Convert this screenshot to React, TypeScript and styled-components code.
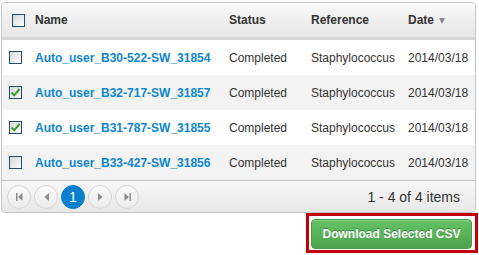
import React from "react";
import styled, { createGlobalStyle } from "styled-components";

const Global = createGlobalStyle`
  html, body { margin: 0; padding: 0; background: #fff; }
  body { font-family: "Liberation Sans", Arial, sans-serif; font-size: 12px; color: #333; }
`;

const Page = styled.div`
  width: 479px;
  padding-top: 2px;
  box-sizing: border-box;
`;

const Grid = styled.div`
  margin-left: 1px;
  width: 475px;
  box-sizing: border-box;
  border: 1px solid #c5c5c5;
  border-radius: 4px;
  overflow: hidden;
`;

const COLS = "27px 194px 82px 97px 1fr";

const HeaderRow = styled.div`
  display: grid;
  grid-template-columns: ${COLS};
  height: 37px;
  box-sizing: border-box;
  border-bottom: 3px solid #d6d6d6;
  background: linear-gradient(#f8f8f8, #e6e6e6);
  align-items: center;
`;

const HeadCell = styled.div`
  padding-left: 6px;
  font-weight: bold;
  color: #333;
  display: flex;
  align-items: center;
  gap: 5px;
`;

const CheckCell = styled.div<{ $offset: number }>`
  padding-left: ${(p) => p.$offset}px;
  display: flex;
  align-items: center;
`;

const Row = styled.div<{ $alt: boolean }>`
  display: grid;
  grid-template-columns: ${COLS};
  height: 35px;
  align-items: center;
  background: ${(p) => (p.$alt ? "#f3f3f3" : "#fff")};
`;

const Cell = styled.div`
  padding-left: 6px;
  white-space: nowrap;
  color: #333;
`;

const NameLink = styled.a`
  padding-left: 6px;
  font-weight: bold;
  color: #0d86d0;
  text-decoration: none;
  white-space: nowrap;
`;

const Box = styled.span`
  width: 13px;
  height: 13px;
  box-sizing: border-box;
  border: 1px solid #1d4c78;
  background: linear-gradient(135deg, #d8d8d8, #fdfdfd);
  display: inline-flex;
  align-items: center;
  justify-content: center;
`;

const SortArrow = styled.span`
  width: 0;
  height: 0;
  border-left: 3.5px solid transparent;
  border-right: 3.5px solid transparent;
  border-top: 6px solid #8a8a8a;
  margin-top: 1px;
`;

const Pager = styled.div`
  height: 32px;
  box-sizing: border-box;
  border-top: 1px solid #c5c5c5;
  background: linear-gradient(#f7f7f7, #e8e8e8);
  display: flex;
  align-items: center;
  padding-left: 5px;
  padding-right: 15px;
`;

const PageButtons = styled.div`
  display: flex;
  gap: 3px;
`;

const PageBtn = styled.span<{ $active?: boolean }>`
  width: 24px;
  height: 24px;
  box-sizing: border-box;
  border-radius: 50%;
  border: 1px solid ${(p) => (p.$active ? "#0a7cc9" : "#d3d3d3")};
  background: ${(p) => (p.$active ? "#0a7fcd" : "linear-gradient(#fafafa, #ececec)")};
  color: #fff;
  font-size: 14px;
  display: flex;
  align-items: center;
  justify-content: center;
`;

const PagerInfo = styled.div`
  margin-left: auto;
  font-size: 14px;
  color: #333;
`;

const Actions = styled.div`
  display: flex;
  justify-content: flex-end;
  padding-right: 1px;
`;

const Highlight = styled.div`
  width: 172px;
  height: 40px;
  box-sizing: border-box;
  border: 3px solid #c00000;
  padding: 3px 3px 1px 2px;
`;

const DownloadButton = styled.button`
  width: 100%;
  height: 30px;
  border: 1px solid #4c9a4c;
  border-radius: 4px;
  background: linear-gradient(#63c363, #4fa24f);
  color: #fff;
  font-family: "Liberation Sans", Arial, sans-serif;
  font-weight: bold;
  font-size: 12px;
  text-shadow: 0 -1px 0 rgba(0, 0, 0, 0.3);
  box-shadow: inset 0 1px 0 rgba(255, 255, 255, 0.2);
  padding: 0;
  cursor: pointer;
`;

const Check = () => (
  <svg width="11" height="11" viewBox="0 0 11 11">
    <path d="M1.5 5.5 L4.2 8.3 L9.5 2" fill="none" stroke="#3a9d23" strokeWidth="2" />
  </svg>
);

const Checkbox = ({ checked }: { checked?: boolean }) => <Box>{checked ? <Check /> : null}</Box>;

const Icon = ({ kind }: { kind: "first" | "prev" | "next" | "last" }) => {
  const c = "#8c8c8c";
  return (
    <svg width="9" height="8" viewBox="0 0 9 8">
      {kind === "first" && (
        <>
          <rect x="1" y="0" width="1.5" height="8" fill={c} />
          <path d="M7.5 0 L3 4 L7.5 8 Z" fill={c} />
        </>
      )}
      {kind === "prev" && <path d="M7 0 L2.5 4 L7 8 Z" fill={c} />}
      {kind === "next" && <path d="M2 0 L6.5 4 L2 8 Z" fill={c} />}
      {kind === "last" && (
        <>
          <path d="M1.5 0 L6 4 L1.5 8 Z" fill={c} />
          <rect x="6.5" y="0" width="1.5" height="8" fill={c} />
        </>
      )}
    </svg>
  );
};

const rows = [
  { name: "Auto_user_B30-522-SW_31854", checked: false },
  { name: "Auto_user_B32-717-SW_31857", checked: true },
  { name: "Auto_user_B31-787-SW_31855", checked: true },
  { name: "Auto_user_B33-427-SW_31856", checked: false },
];

export default function App() {
  return (
    <Page>
      <Global />
      <Grid>
        <HeaderRow>
          <CheckCell $offset={10}>
            <Checkbox />
          </CheckCell>
          <HeadCell>Name</HeadCell>
          <HeadCell>Status</HeadCell>
          <HeadCell>Reference</HeadCell>
          <HeadCell>
            Date <SortArrow />
          </HeadCell>
        </HeaderRow>
        {rows.map((r, i) => (
          <Row key={r.name} $alt={i % 2 === 1}>
            <CheckCell $offset={7}>
              <Checkbox checked={r.checked} />
            </CheckCell>
            <NameLink href="#">{r.name}</NameLink>
            <Cell>Completed</Cell>
            <Cell>Staphylococcus</Cell>
            <Cell>2014/03/18</Cell>
          </Row>
        ))}
        <Pager>
          <PageButtons>
            <PageBtn><Icon kind="first" /></PageBtn>
            <PageBtn><Icon kind="prev" /></PageBtn>
            <PageBtn $active>1</PageBtn>
            <PageBtn><Icon kind="next" /></PageBtn>
            <PageBtn><Icon kind="last" /></PageBtn>
          </PageButtons>
          <PagerInfo>1 - 4 of 4 items</PagerInfo>
        </Pager>
      </Grid>
      <Actions>
        <Highlight>
          <DownloadButton>Download Selected CSV</DownloadButton>
        </Highlight>
      </Actions>
    </Page>
  );
}
